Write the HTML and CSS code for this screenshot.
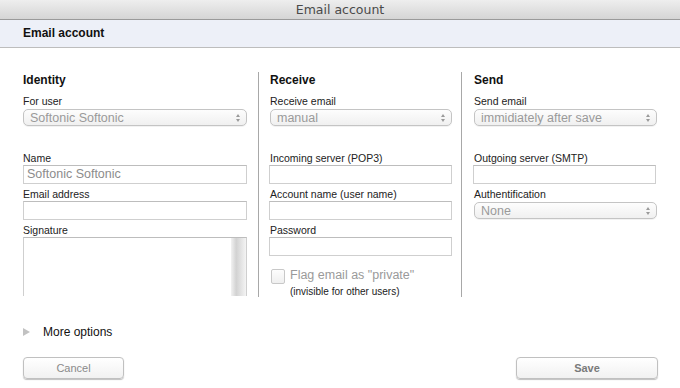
FILE: index.html
```html
<!DOCTYPE html>
<html>
<head>
<meta charset="utf-8">
<link rel="stylesheet" href="styles.css">
</head>
<body>
<div class="window">
  <div class="titlebar">Email account</div>
  <div class="header">Email account</div>
  <div class="columns">
    <div class="col col1">
      <div class="heading">Identity</div>
      <div class="label first">For user</div>
      <div class="select"><span>Softonic Softonic</span><span class="arrows"><i class="up"></i><i class="down"></i></span></div>
      <div class="label gap">Name</div>
      <div class="input"><span>Softonic Softonic</span></div>
      <div class="label">Email address</div>
      <div class="input"></div>
      <div class="label">Signature</div>
      <div class="textarea"><div class="scroll"></div></div>
    </div>
    <div class="col col2">
      <div class="heading">Receive</div>
      <div class="label first">Receive email</div>
      <div class="select"><span>manual</span><span class="arrows"><i class="up"></i><i class="down"></i></span></div>
      <div class="label gap">Incoming server (POP3)</div>
      <div class="input"></div>
      <div class="label">Account name (user name)</div>
      <div class="input"></div>
      <div class="label">Password</div>
      <div class="input"></div>
      <div class="check-row">
        <div class="checkbox"></div>
        <div class="check-text">
          <div class="check-main">Flag email as "private"</div>
          <div class="check-sub">(invisible for other users)</div>
        </div>
      </div>
    </div>
    <div class="col col3">
      <div class="heading">Send</div>
      <div class="label first">Send email</div>
      <div class="select"><span>immidiately after save</span><span class="arrows"><i class="up"></i><i class="down"></i></span></div>
      <div class="label gap">Outgoing server (SMTP)</div>
      <div class="input"></div>
      <div class="label">Authentification</div>
      <div class="select"><span>None</span><span class="arrows"><i class="up"></i><i class="down"></i></span></div>
    </div>
  </div>
  <div class="more"><span class="tri"></span><span>More options</span></div>
  <div class="buttons">
    <div class="btn cancel">Cancel</div>
    <div class="btn save">Save</div>
  </div>
</div>
</body>
</html>
```
FILE: styles.css
```css
* { box-sizing: border-box; }
html, body { margin: 0; padding: 0; background: #fff; }
body { width: 680px; height: 388px; overflow: hidden; font-family: "Liberation Sans", Arial, sans-serif; color: #222; }
.titlebar {
  height: 20px;
  background: linear-gradient(#eeeeee, #d5d5d5);
  border-bottom: 1px solid #9a9a9a;
  text-align: center;
  font-family: "DejaVu Sans", sans-serif;
  font-size: 12.5px;
  line-height: 19px;
  color: #4a4a4a;
}
.header {
  height: 28px;
  background: #edf0f8;
  border-bottom: 1px solid #bdbdbd;
  padding-left: 23px;
  font-weight: bold;
  font-size: 12px;
  line-height: 27px;
  color: #111;
}
.columns { display: flex; padding: 24px 0 0 23px; }
.col { height: 225px; }
.col1 { width: 224px; margin-right: 11px; }
.col2 { width: 203px; border-left: 1px solid #a8a8a8; padding: 0 9px 0 11px; }
.col3 { width: 196px; border-left: 1px solid #a8a8a8; padding: 0 0 0 12px; }
.heading { font-weight: bold; font-size: 12px; line-height: 16px; color: #111; }
.label { font-size: 10.5px; line-height: 14px; margin-top: 3px; color: #222; }
.label.first { margin-top: 6px; }
.label.gap { margin-top: 25px; }
.select {
  height: 17px;
  margin-top: 1px;
  border: 1px solid #c4c4c4;
  border-radius: 5px;
  background: linear-gradient(#fdfdfd, #f0f0f0);
  display: flex;
  align-items: center;
  justify-content: space-between;
  padding: 0 6px 0 6px;
  font-size: 12.5px;
  color: #9a9a9a;
  box-shadow: 0 1px 0 rgba(0,0,0,0.05);
}
.arrows { display: flex; flex-direction: column; gap: 2px; }
.arrows i { display: block; width: 0; height: 0; border-left: 2px solid transparent; border-right: 2px solid transparent; }
.arrows .up { border-bottom: 3px solid #9a9a9a; }
.arrows .down { border-top: 3px solid #9a9a9a; }
.input {
  height: 19px;
  border: 1px solid #cfcfcf;
  border-top-color: #bdbdbd;
  background: #fff;
  font-size: 12.5px;
  color: #8c8c8c;
  padding-left: 3px;
  line-height: 17px;
}
.col2 .input, .col3 .input { width: 183px; margin-left: -1px; }
.textarea {
  height: 59px;
  border: 1px solid #cfcfcf;
  border-top-color: #bdbdbd;
  border-bottom: none;
  display: flex;
  justify-content: flex-end;
}
.scroll { width: 15px; height: 100%; background: linear-gradient(to right, #f2f2f2, #d2d2d2 35%, #f4f4f4); }
.check-row { display: flex; margin-top: 12px; margin-left: 1px; }
.checkbox {
  width: 14px; height: 15px;
  margin-top: 1px;
  border: 1px solid #c8c8c8;
  border-radius: 2px;
  background: linear-gradient(#fdfdfd, #efefef);
  margin-right: 5px;
}
.check-main { font-size: 12.5px; color: #9a9a9a; line-height: 15px; }
.check-sub { font-size: 10px; color: #222; line-height: 12px; margin-top: 3px; }
.more { display: flex; align-items: center; padding-left: 23px; margin-top: 27px; height: 16px; font-size: 12px; color: #111; }
.tri { width: 0; height: 0; border-top: 4px solid transparent; border-bottom: 4px solid transparent; border-left: 7px solid #c2c2c2; margin-right: 13px; }
.buttons { display: flex; justify-content: space-between; padding: 0 22px 0 23px; margin-top: 17px; }
.btn {
  height: 22px;
  border: 1px solid #c0c0c0;
  border-radius: 4px;
  background: linear-gradient(#ffffff, #f1f1f1);
  box-shadow: 0 1px 1px rgba(0,0,0,0.25);
  text-align: center;
  font-size: 11px;
  line-height: 20px;
  color: #8a8a8a;
}
.cancel { width: 101px; }
.save { width: 142px; font-weight: bold; color: #7a7a7a; }
```
